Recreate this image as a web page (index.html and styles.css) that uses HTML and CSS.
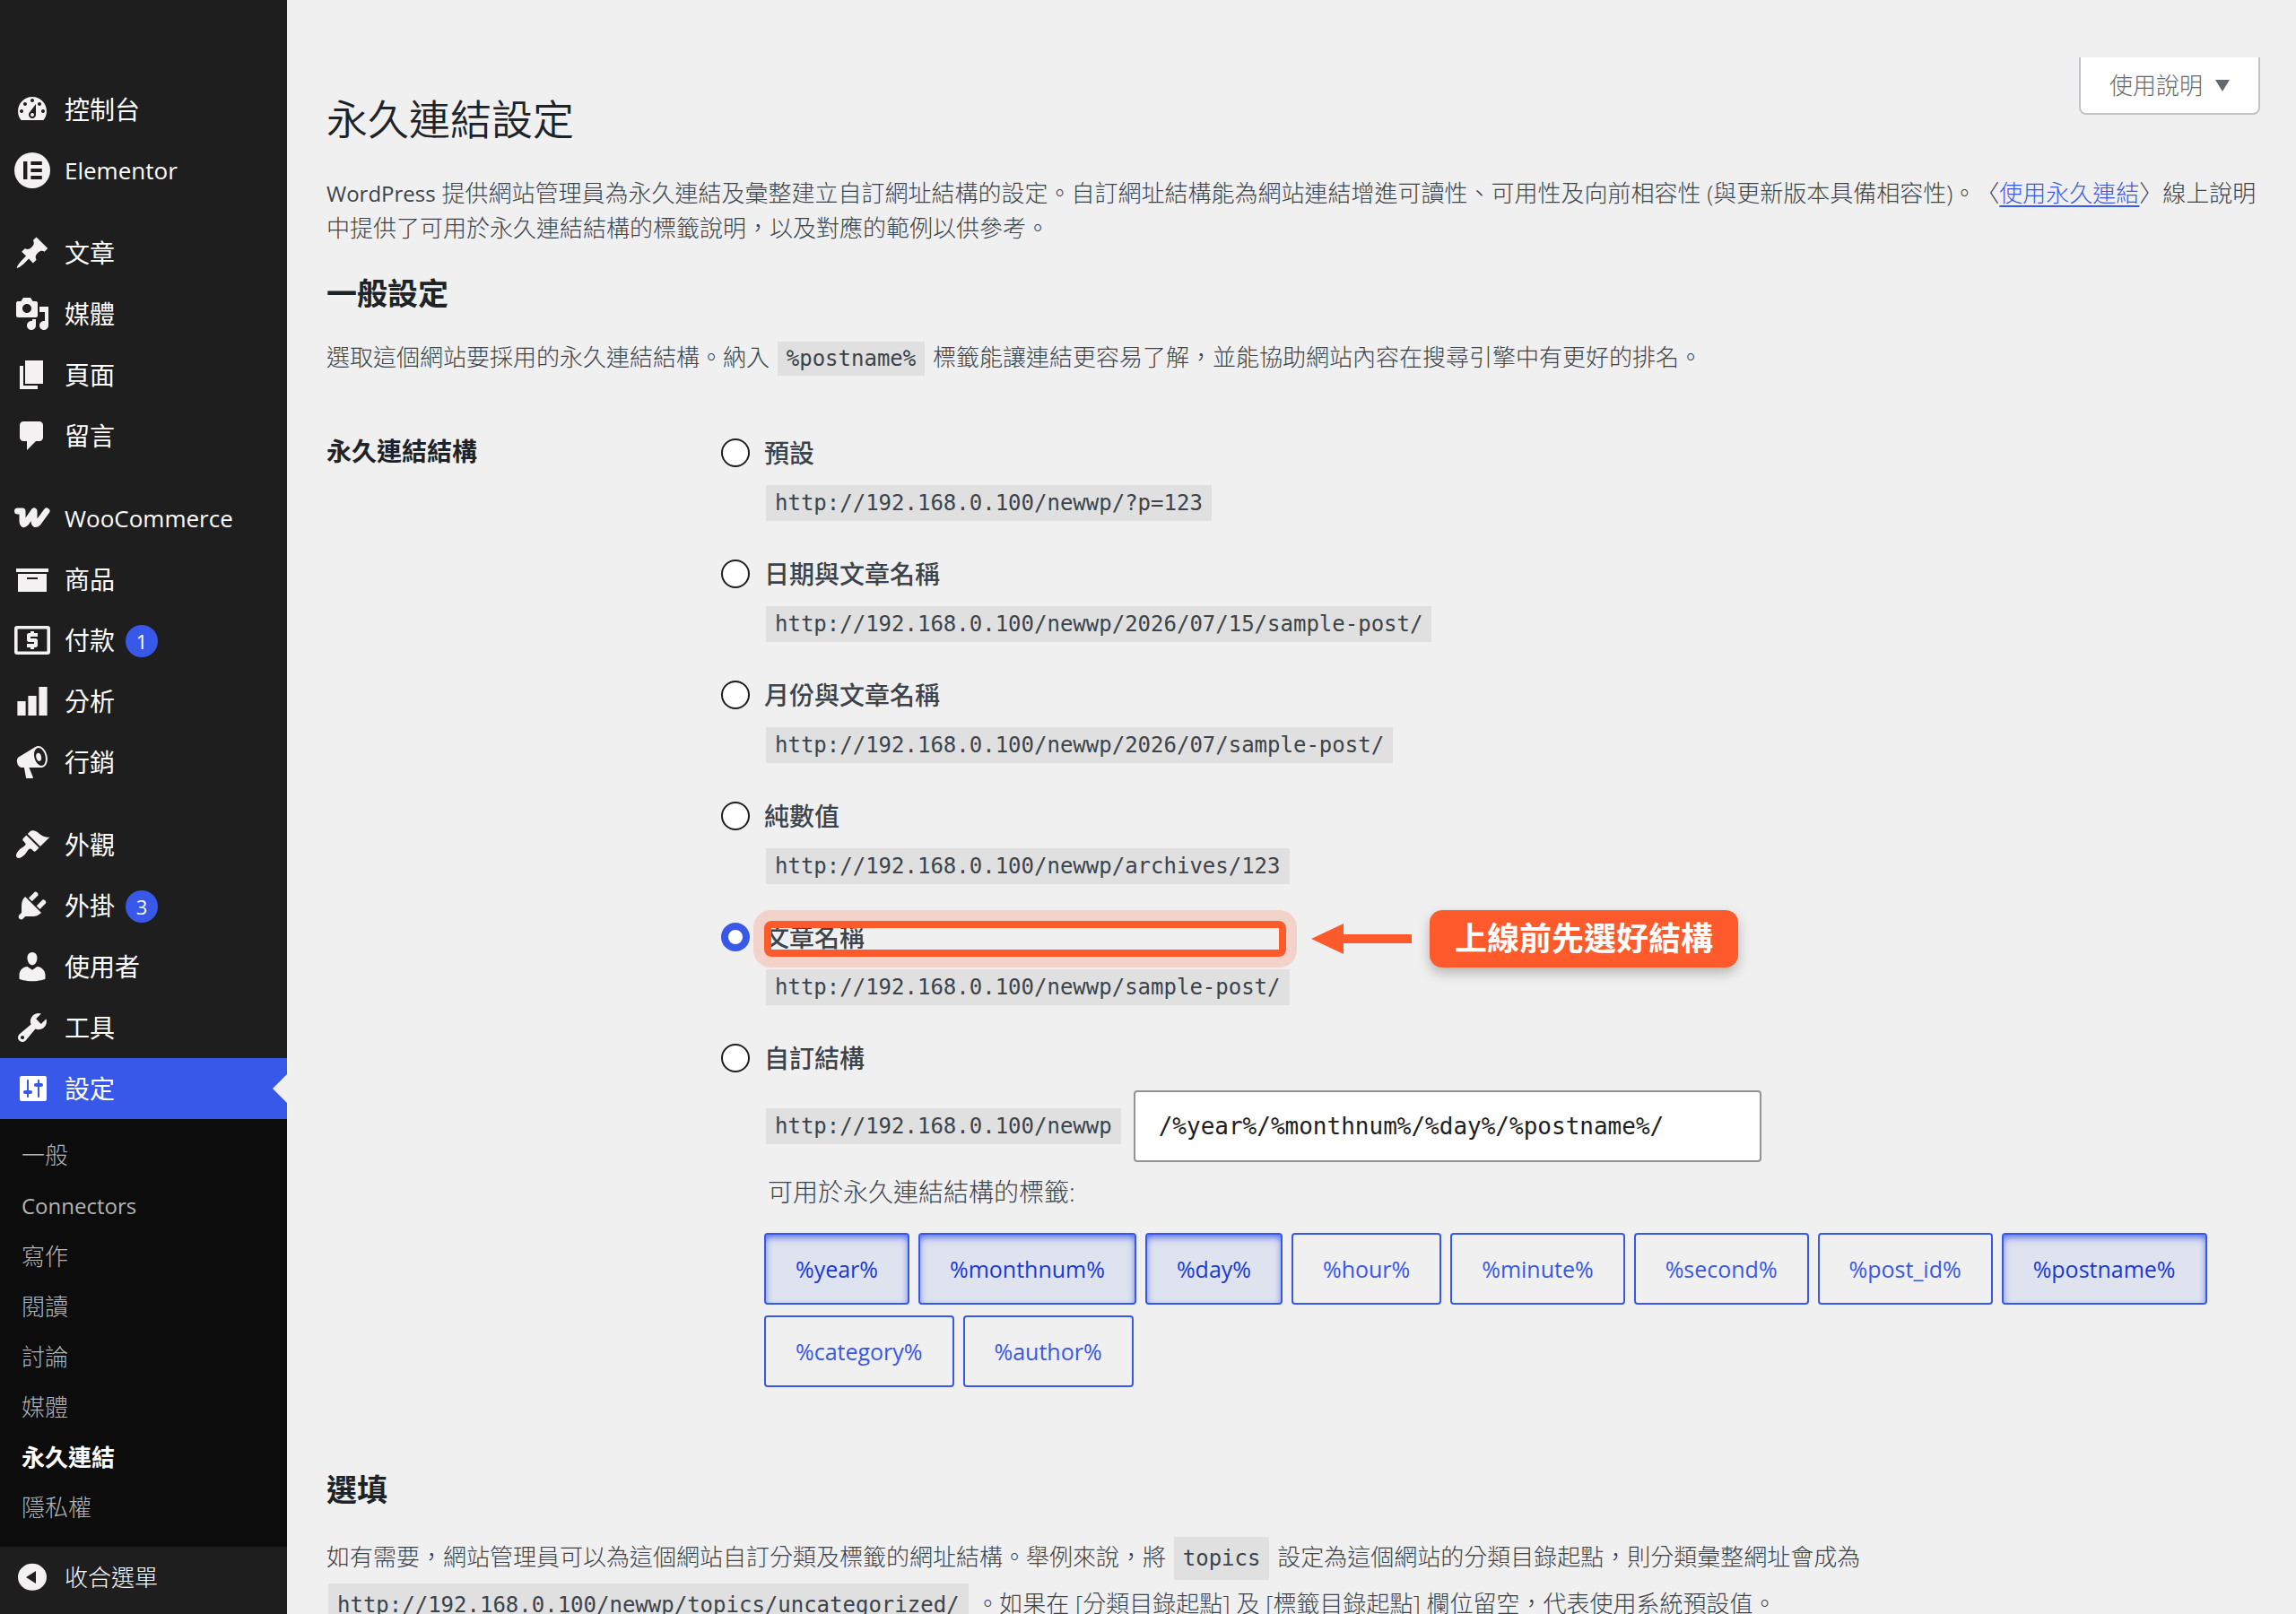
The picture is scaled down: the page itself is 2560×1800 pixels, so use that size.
FILE: index.html
```html
<!DOCTYPE html>
<html lang="zh-Hant">
<head>
    <meta charset="UTF-8">
    <meta name="viewport" content="width=device-width, initial-scale=1.0">
    <title>永久連結設定</title>
    <link rel="stylesheet" href="styles.css">
</head>
<body>
    <div class="admin">
        <nav class="sidebar" aria-label="主選單">
            <ul class="menu">
                <li><a class="menu-link" href="#"><svg class="icon" viewBox="0 0 20 20"><path d="M3.76 16h12.48c1.1-1.37 1.76-3.11 1.76-5 0-4.42-3.58-8-8-8s-8 3.58-8 8c0 1.89.66 3.63 1.76 5zM10 4c.55 0 1 .45 1 1s-.45 1-1 1-1-.45-1-1 .45-1 1-1zM6 6c.55 0 1 .45 1 1s-.45 1-1 1-1-.45-1-1 .45-1 1-1zm8 0c.55 0 1 .45 1 1s-.45 1-1 1-1-.45-1-1 .45-1 1-1zm-5.37 5.55L12 7v6c0 1.1-.9 2-2 2s-2-.9-2-2c0-.57.24-1.08.63-1.45zM4 10c.55 0 1 .45 1 1s-.45 1-1 1-1-.45-1-1 .45-1 1-1zm12 0c.55 0 1 .45 1 1s-.45 1-1 1-1-.45-1-1 .45-1 1-1zm-5 3c0-.55-.45-1-1-1s-1 .45-1 1 .45 1 1 1 1-.45 1-1z"/></svg>控制台</a></li>
                <li><a class="menu-link" href="#"><svg class="icon" viewBox="0 0 20 20"><path fill-rule="evenodd" d="M10 0a10 10 0 1 0 0 20a10 10 0 0 0 0-20zM5 5h2.2v10H5zM9.2 5h6.2v2H9.2zM9.2 9h6.2v2H9.2zM9.2 13h6.2v2H9.2z"/></svg><span class="latin">Elementor</span></a></li>
                <li class="separator"></li>
                <li><a class="menu-link" href="#"><svg class="icon" viewBox="0 0 20 20"><path d="M10.44 3.02l1.82-1.82 6.36 6.35-1.83 1.82c-1.05-.68-2.48-.57-3.41.36l-.75.75c-.92.93-1.04 2.35-.35 3.41l-1.83 1.82-2.41-2.41-2.8 2.79c-.42.42-3.38 2.71-3.8 2.29s1.86-3.39 2.28-3.81l2.79-2.79L4.1 9.36l1.83-1.82c1.05.69 2.48.57 3.4-.36l.75-.75c.93-.92 1.05-2.35.36-3.41z"/></svg>文章</a></li>
                <li><a class="menu-link" href="#"><svg class="icon" viewBox="0 0 20 20"><path d="M13 11V4c0-.55-.45-1-1-1h-1.67L9 1H5L3.67 3H2c-.55 0-1 .45-1 1v7c0 .55.45 1 1 1h10c.55 0 1-.45 1-1zM7 4.5c1.38 0 2.5 1.12 2.5 2.5S8.38 9.5 7 9.5 4.5 8.38 4.5 7 5.62 4.5 7 4.5zM14 6h5v10.5c0 1.38-1.12 2.5-2.5 2.5S14 17.88 14 16.5s1.12-2.5 2.5-2.5c.17 0 .34.02.5.05V9h-3V6zm-4 8.05V13h2v3.5c0 1.38-1.12 2.5-2.5 2.5S7 17.88 7 16.5 8.12 14 9.5 14c.17 0 .34.02.5.05z"/></svg>媒體</a></li>
                <li><a class="menu-link" href="#"><svg class="icon" viewBox="0 0 20 20"><path d="M6 15V2h10v13H6zm-1 1h8v2H3V5h2v11z"/></svg>頁面</a></li>
                <li><a class="menu-link" href="#"><svg class="icon" viewBox="0 0 20 20"><path d="M5 2h9c1.1 0 2 .9 2 2v7c0 1.1-.9 2-2 2h-2l-5 5v-5H5c-1.1 0-2-.9-2-2V4c0-1.1.9-2 2-2z"/></svg>留言</a></li>
                <li class="separator"></li>
                <li><a class="menu-link" href="#"><svg class="icon" viewBox="0 0 40 40"><path class="line" stroke-width="7" d="M3.500 12H9V23Q9.500 29 13 25L22 12V23Q22.500 29 26.500 25L36 12"/></svg><span class="latin">WooCommerce</span></a></li>
                <li><a class="menu-link" href="#"><svg class="icon" viewBox="0 0 20 20"><path d="M19 4v2H1V4h18zM2 7h16v10H2V7zm11 3V9H7v1h6z"/></svg>商品</a></li>
                <li><a class="menu-link" href="#"><svg class="icon" viewBox="0 0 20 20"><path fill-rule="evenodd" d="M1.500 2h17A1.500 1.500 0 0 1 20 3.500v13a1.500 1.500 0 0 1-1.500 1.500h-17A1.500 1.500 0 0 1 0 16.500v-13A1.500 1.500 0 0 1 1.500 2zM1.800 3.800v12.400h16.400V3.800zM9 5h2v1h2v2H9v1h3.200l.8.8v3.400l-.8.8H11v1H9v-1H7v-2h4v-1H7.800L7 10.200V6.800l.8-.8H9z"/></svg>付款 <span class="badge">1</span></a></li>
                <li><a class="menu-link" href="#"><svg class="icon" viewBox="0 0 20 20"><path d="M18.300 18V2h-4.600v16zM12.300 18V7H7.700v11zM6.300 18v-8H1.700v8z"/></svg>分析</a></li>
                <li><a class="menu-link" href="#"><svg class="icon" viewBox="0 0 20 20"><path d="M18.150 5.940c.46 1.620.38 3.220-.02 4.480-.42 1.280-1.260 2.180-2.300 2.480-.16.060-.26.060-.4.060-.06.020-.12.020-.18.020-.06.020-.14.020-.22.020h-6.800l2.220 5.500c.02.140-.06.260-.14.340-.08.100-.24.160-.34.160H6.950c-.1 0-.26-.06-.34-.16-.08-.08-.16-.2-.14-.34l-1-5.500H4.250l-.02-.02c-.5.060-1.080-.18-1.540-.62s-.88-1.080-1.060-1.880c-.24-.8-.2-1.560-.02-2.200.18-.62.58-1.080 1.060-1.300l.02-.02 9-5.400c.1-.06.180-.1.240-.16.060-.04.140-.08.240-.12.160-.08.280-.12.500-.18 1.040-.3 2.240.1 3.220.98s1.840 2.240 2.260 3.860zm-2.580 5.980h-.02c.4-.1.740-.34 1.040-.7.580-.7.860-1.760.860-3.040 0-.64-.1-1.300-.28-1.980-.34-1.360-1.020-2.500-1.780-3.240s-1.680-1.100-2.460-.88c-.82.220-1.400.960-1.700 2-.32 1.040-.28 2.360.060 3.720.38 1.360 1 2.500 1.800 3.240.78.740 1.620 1.100 2.480.88zm-2.540-7.080c.22-.04.420-.02.620.04.380.160.760.480 1.020 1s.42 1.200.42 1.780c0 .3-.04.560-.12.800-.18.480-.44.840-.86.940-.34.100-.8-.06-1.140-.4s-.64-.86-.78-1.500c-.18-.62-.12-1.240.020-1.720s.48-.84.820-.94z"/></svg>行銷</a></li>
                <li class="separator"></li>
                <li><a class="menu-link" href="#"><svg class="icon" viewBox="0 0 20 20"><path d="M14.480 11.060L7.410 3.990l1.500-1.500c.5-.56 2.300-.47 3.510.32 1.210.8 1.430 1.280 2.910 2.100 1.180.64 2.450 1.260 4.450.85zm-.71.71L6.700 4.700 4.930 6.470c-.39.39-.39 1.020 0 1.410l1.060 1.060c.39.39.39 1.030 0 1.420-.6.6-1.430 1.110-2.210 1.690-.35.26-.7.53-1.010.84C1.430 14.230.4 16.080 1.400 17.070c.99 1 2.840-.03 4.180-1.360.31-.31.58-.66.85-1.020.57-.78 1.080-1.610 1.690-2.210.39-.39 1.020-.39 1.410 0l1.060 1.060c.39.39 1.020.39 1.410 0z"/></svg>外觀</a></li>
                <li><a class="menu-link" href="#"><svg class="icon" viewBox="0 0 20 20"><path d="M13.110 4.360L9.870 7.600 8 5.730l3.240-3.240c.35-.34 1.050-.2 1.560.32.52.51.66 1.210.31 1.550zm-8 1.770l.91-1.120 9.010 9.010-1.190.84c-.71.71-2.630 1.160-3.820 1.160H6.140L4.900 17.260c-.59.59-1.540.59-2.120 0-.59-.58-.59-1.530 0-2.120l1.240-1.240v-3.880c0-1.130.4-3.190 1.090-3.890zm7.260 3.970l3.240-3.240c.34-.35 1.040-.21 1.550.31.52.51.66 1.210.31 1.550l-3.240 3.250z"/></svg>外掛 <span class="badge">3</span></a></li>
                <li><a class="menu-link" href="#"><svg class="icon" viewBox="0 0 20 20"><path d="M10 9.250c-2.270 0-2.730-3.440-2.730-3.440C7 4.020 7.820 2 9.970 2c2.160 0 2.980 2.020 2.710 3.810 0 0-.41 3.440-2.680 3.440zm0 2.570L12.720 10c2.390 0 4.520 2.330 4.520 4.530v2.490s-3.650 1.130-7.240 1.130c-3.650 0-7.240-1.130-7.240-1.130v-2.490c0-2.250 1.940-4.480 4.470-4.480z"/></svg>使用者</a></li>
                <li><a class="menu-link" href="#"><svg class="icon" viewBox="0 0 20 20"><path d="M16.680 9.770c-1.340 1.340-3.300 1.670-4.950.99l-5.410 6.520c-.99.99-2.590.99-3.580 0s-.99-2.590 0-3.570l6.520-5.420c-.68-1.650-.35-3.610.99-4.950 1.280-1.280 3.120-1.620 4.720-1.060l-2.890 2.890 2.820 2.820 2.860-2.870c.53 1.580.18 3.390-1.080 4.650zM3.810 16.210c.4.39 1.040.39 1.430 0 .4-.4.4-1.040 0-1.430-.39-.4-1.030-.4-1.430 0-.39.39-.39 1.030 0 1.430z"/></svg>工具</a></li>
                <li>
                    <a class="menu-link current" href="#"><svg class="icon" viewBox="0 0 20 20"><path d="M18 16V4c0-.55-.45-1-1-1H4c-.55 0-1 .45-1 1v12c0 .55.45 1 1 1h13c.55 0 1-.45 1-1zM8 11h1c.55 0 1 .45 1 1s-.45 1-1 1H8v1.500c0 .28-.22.5-.5.5s-.5-.22-.5-.5V13H6c-.55 0-1-.45-1-1s.45-1 1-1h1V5.500c0-.28.22-.5.5-.5s.5.22.5.5V11zm5-2h-1c-.55 0-1-.45-1-1s.45-1 1-1h1V5.500c0-.28.22-.5.5-.5s.5.22.5.5V7h1c.55 0 1 .45 1 1s-.45 1-1 1h-1v5.500c0 .28-.22.5-.5.5s-.5-.22-.5-.5V9z"/></svg>設定</a>
                    <ul class="submenu">
                        <li><a href="#">一般</a></li>
                        <li><a href="#"><span class="latin">Connectors</span></a></li>
                        <li><a href="#">寫作</a></li>
                        <li><a href="#">閱讀</a></li>
                        <li><a href="#">討論</a></li>
                        <li><a href="#">媒體</a></li>
                        <li><a class="active" href="#">永久連結</a></li>
                        <li><a href="#">隱私權</a></li>
                    </ul>
                </li>
            </ul>
            <button class="collapse" type="button"><svg class="icon" viewBox="0 0 20 20"><path fill-rule="evenodd" d="M10 2.400a8 7.500 0 1 0 0 15a8 7.500 0 0 0 0-15zM12 6.500v7L6.500 10z"/></svg>收合選單</button>
        </nav>

        <main class="content">
            <header class="page-head">
                <h1>永久連結設定</h1>
                <button class="help" type="button">使用說明 <span class="caret"></span></button>
            </header>

            <p class="intro"><span class="latin">WordPress</span> 提供網站管理員為永久連結及彙整建立自訂網址結構的設定。自訂網址結構能為網站連結增進可讀性、可用性及向前相容性 (與更新版本具備相容性)。〈<a href="#">使用永久連結</a>〉線上說明中提供了可用於永久連結結構的標籤說明，以及對應的範例以供參考。</p>

            <h2>一般設定</h2>
            <p class="intro">選取這個網站要採用的永久連結結構。納入 <code>%postname%</code> 標籤能讓連結更容易了解，並能協助網站內容在搜尋引擎中有更好的排名。</p>

            <form class="form-row">
                <h3 id="structure">永久連結結構</h3>
                <div class="options" role="radiogroup" aria-labelledby="structure">
                    <div class="option">
                        <input type="radio" name="selection" id="plain">
                        <label for="plain">預設</label>
                        <div class="detail"><code>http://192.168.0.100/newwp/?p=123</code></div>
                    </div>
                    <div class="option">
                        <input type="radio" name="selection" id="day-name">
                        <label for="day-name">日期與文章名稱</label>
                        <div class="detail"><code>http://192.168.0.100/newwp/2026/07/15/sample-post/</code></div>
                    </div>
                    <div class="option">
                        <input type="radio" name="selection" id="month-name">
                        <label for="month-name">月份與文章名稱</label>
                        <div class="detail"><code>http://192.168.0.100/newwp/2026/07/sample-post/</code></div>
                    </div>
                    <div class="option">
                        <input type="radio" name="selection" id="numeric">
                        <label for="numeric">純數值</label>
                        <div class="detail"><code>http://192.168.0.100/newwp/archives/123</code></div>
                    </div>
                    <div class="option">
                        <input type="radio" name="selection" id="post-name" checked>
                        <label for="post-name">文章名稱</label>
                        <div class="detail"><code>http://192.168.0.100/newwp/sample-post/</code></div>
                        <div class="callout">
                            <span class="callout-frame"></span>
                            <svg class="callout-arrow" viewBox="0 0 112 34"><path d="M0 17L36 0v12h76v10H36v12z"/></svg>
                            <strong class="callout-text">上線前先選好結構</strong>
                        </div>
                    </div>
                    <div class="option">
                        <input type="radio" name="selection" id="custom">
                        <label for="custom">自訂結構</label>
                        <div class="detail">
                            <code>http://192.168.0.100/newwp</code>
                            <input class="text-input" type="text" aria-label="自訂結構" value="/%year%/%monthnum%/%day%/%postname%/">
                        </div>
                    </div>
                    <div class="tags">
                        <p>可用於永久連結結構的標籤:</p>
                        <div class="tag-list">
                            <button class="tag active" type="button">%year%</button>
                            <button class="tag active" type="button">%monthnum%</button>
                            <button class="tag active" type="button">%day%</button>
                            <button class="tag" type="button">%hour%</button>
                            <button class="tag" type="button">%minute%</button>
                            <button class="tag" type="button">%second%</button>
                            <button class="tag" type="button">%post_id%</button>
                            <button class="tag active" type="button">%postname%</button>
                            <button class="tag" type="button">%category%</button>
                            <button class="tag" type="button">%author%</button>
                        </div>
                    </div>
                </div>
            </form>

            <h2>選填</h2>
            <p class="optional">如有需要，網站管理員可以為這個網站自訂分類及標籤的網址結構。舉例來說，將 <code>topics</code> 設定為這個網站的分類目錄起點，則分類彙整網址會成為 <code>http://192.168.0.100/newwp/topics/uncategorized/</code> 。如果在 [分類目錄起點] 及 [標籤目錄起點] 欄位留空，代表使用系統預設值。</p>
        </main>
    </div>
</body>
</html>
```
FILE: styles.css
```css
* {
    box-sizing: border-box;
}
body {
    margin: 0;
    background: #f0f0f0;
    color: #3c434a;
    font-family: "Open Sans", "Noto Sans CJK TC", sans-serif;
    font-size: 26px;
    line-height: 38px;
    text-spacing-trim: space-all;
}
h1, h2, h3, p, ul {
    margin: 0;
    padding: 0;
}
ul {
    list-style: none;
}
button, input {
    font: inherit;
}
.latin {
    font-size: 24px;
    font-weight: 400;
}
.admin {
    display: flex;
    height: 100vh;
}

/* Sidebar */
.sidebar {
    flex: 0 0 320px;
    padding-top: 88px;
    background: #1e1e1e;
    overflow: hidden;
}
.menu-link, .collapse {
    display: flex;
    align-items: center;
    gap: 16px;
    width: 100%;
    height: 68px;
    padding: 0 16px;
    color: #fff;
    font-size: 28px;
    text-decoration: none;
}
.menu-link .latin {
    font-size: 26px;
}
.icon {
    flex: none;
    width: 40px;
    height: 40px;
    fill: #f3f1f1;
}
.icon .line {
    fill: none;
    stroke: #f3f1f1;
    stroke-linecap: round;
    stroke-linejoin: round;
}
.separator {
    height: 24px;
}
.badge {
    width: 36px;
    height: 36px;
    margin: 2px 0 0 -4px;
    border-radius: 50%;
    background: #3858e9;
    font-size: 22px;
    line-height: 36px;
    text-align: center;
}
.current {
    position: relative;
    background: #3858e9;
}
.current .icon {
    fill: #fff;
}
.current::after {
    content: "";
    position: absolute;
    right: 0;
    top: 18px;
    border: 16px solid transparent;
    border-left: 0;
    border-right-color: #f0f0f0;
}
.submenu {
    padding: 12px 0 16px;
    background: #0c0c0c;
}
.submenu a {
    display: block;
    padding: 0 24px;
    color: #b4b4b4;
    font-weight: 300;
    line-height: 56px;
    text-decoration: none;
}
.submenu .active {
    color: #fff;
    font-weight: 600;
}
.collapse {
    border: 0;
    background: none;
    font-size: 26px;
    font-weight: 300;
    cursor: pointer;
}

/* Page header */
.content {
    flex: 1;
    min-width: 0;
    padding: 64px 36px 40px 44px;
    font-weight: 300;
    overflow-y: auto;
    scrollbar-width: none;
}
.page-head {
    display: flex;
    justify-content: space-between;
    align-items: flex-start;
    height: 132px;
    padding-right: 4px;
}
h1 {
    padding-top: 34px;
    color: #1d2327;
    font-size: 46px;
    font-weight: 350;
    line-height: 68px;
}
.help {
    display: flex;
    align-items: center;
    gap: 14px;
    height: 64px;
    padding: 0 32px;
    border: 2px solid #c3c4c7;
    border-top: 0;
    border-radius: 0 0 8px 8px;
    background: #fff;
    color: #646970;
}
.caret {
    border: 8px solid transparent;
    border-top: 13px solid #646970;
    border-bottom: 0;
}
h2 {
    margin: 34px 0 32px;
    color: #1d2327;
    font-size: 34px;
    font-weight: 600;
    line-height: 40px;
}
.intro a {
    color: #3858e9;
    text-underline-offset: 4px;
}
code {
    margin: 0 2px;
    padding: 5px 10px;
    background: #e0e0e0;
    font-family: "DejaVu Sans Mono", monospace;
    font-size: 24px;
    font-weight: 400;
}

/* Permalink structure options */
.form-row {
    display: grid;
    grid-template-columns: 440px 1fr;
    margin-top: 66px;
}
h3 {
    color: #1d2327;
    font-size: 28px;
    font-weight: 600;
    line-height: 36px;
}
.option {
    position: relative;
    display: grid;
    grid-template-columns: 32px 1fr;
    align-items: center;
    gap: 16px;
    margin-bottom: 39px;
}
.option label {
    font-size: 28px;
    font-weight: 500;
    line-height: 40px;
}
.option input[type="radio"] {
    appearance: none;
    width: 32px;
    height: 32px;
    margin: 0;
    border: 2px solid #1e1e1e;
    border-radius: 50%;
    background: #fff;
}
.option input[type="radio"]:checked {
    border: 8px solid #3858e9;
}
.detail {
    grid-column: 2;
    display: flex;
    align-items: center;
    gap: 12px;
}
.detail code {
    padding: 0 10px;
    line-height: 40px;
}
.text-input {
    width: 700px;
    height: 80px;
    padding: 0 26px;
    border: 2px solid #949494;
    border-radius: 4px;
    background: #fff;
    color: #1e1e1e;
    font-family: "DejaVu Sans Mono", monospace;
    font-size: 26px;
    font-weight: 400;
}
.tags {
    margin: -26px 0 0 48px;
}
.tags p {
    padding-left: 4px;
    font-size: 28px;
    line-height: 40px;
}
.tag-list {
    display: flex;
    flex-wrap: wrap;
    gap: 12px 10px;
    margin-top: 26px;
}
.tag {
    height: 80px;
    padding: 0 33px;
    border: 2px solid #3858e9;
    border-radius: 4px;
    background: transparent;
    color: #3858e9;
    font-size: 25px;
    font-weight: 500;
}
.tag.active {
    background: #dfe3ef;
    box-shadow: inset 0 4px 10px -2px #3858e9;
    color: #183ad6;
}

/* Callout over the selected option */
.callout {
    position: absolute;
    top: -10px;
    left: 48px;
    display: flex;
    align-items: center;
    height: 64px;
}
.callout-frame {
    width: 582px;
    height: 40px;
    border: 8px solid #ff5a2b;
    border-radius: 8px;
    box-shadow: 0 0 0 12px rgba(255, 90, 43, 0.2);
}
.callout-arrow {
    width: 112px;
    height: 34px;
    margin: 0 20px 0 28px;
    fill: #ff5a2b;
}
.callout-text {
    padding: 0 28px;
    border-radius: 14px;
    background: #ff5a2b;
    box-shadow: 0 6px 14px rgba(0, 0, 0, 0.25);
    color: #fff;
    font-size: 36px;
    font-weight: 700;
    line-height: 64px;
    white-space: nowrap;
}

.form-row + h2 {
    margin: 94px 0 30px;
}
.optional {
    line-height: 50px;
}
.optional code {
    padding: 10px;
}
```
